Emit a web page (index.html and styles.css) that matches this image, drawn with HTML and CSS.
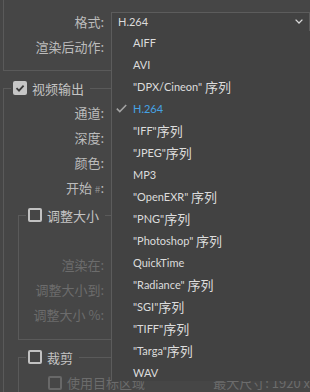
FILE: index.html
```html
<!DOCTYPE html>
<html lang="zh-CN">
<head>
    <meta charset="UTF-8">
    <meta name="viewport" content="width=device-width, initial-scale=1.0">
    <title>导出设置</title>
    <link rel="stylesheet" href="styles.css">
</head>
<body>
<div class="panel">
    <!-- 格式 / 渲染后动作 -->
    <div class="group group-top">
        <div class="row">
            <span class="label">格式:</span>
            <div class="select">
                <span>H.264</span>
                <svg class="chevron" width="8" height="5" viewBox="0 0 8 5">
                    <polyline points="0.6,0.6 4,4 7.4,0.6" fill="none" stroke="#d8d8d8" stroke-width="1.3"/>
                </svg>
            </div>
        </div>
        <div class="row">
            <span class="label">渲染后动作:</span>
        </div>
    </div>

    <fieldset class="group group-video">
        <legend><span class="check checked"><svg width="14" height="14" viewBox="0 0 14 14"><polyline points="3.5,7.2 6,9.6 10.6,4.6" fill="none" stroke="#3b3b3b" stroke-width="1.8"/></svg></span>视频输出</legend>
        <div class="row"><span class="label">通道:</span></div>
        <div class="row"><span class="label">深度:</span></div>
        <div class="row"><span class="label">颜色:</span></div>
        <div class="row"><span class="label">开始 <small>#</small>:</span></div>

        <fieldset class="group group-sub group-resize">
            <legend><span class="check"></span>调整大小</legend>
            <div class="row"><span class="label off">渲染在:</span></div>
            <div class="row"><span class="label off">调整大小到:</span></div>
            <div class="row"><span class="label off">调整大小 %:</span></div>
        </fieldset>

        <fieldset class="group group-sub group-crop">
            <legend><span class="check"></span>裁剪</legend>
            <div class="row">
                <div class="option">
                    <span class="check check-off"></span>
                    <span class="off">使用目标区域</span>
                </div>
                <span class="off max-size">最大尺寸: 1920 x</span>
            </div>
        </fieldset>
    </fieldset>

    <!-- 格式下拉列表 -->
    <ul class="dropdown">
        <li><span class="tick"></span>AIFF</li>
        <li><span class="tick"></span>AVI</li>
        <li><span class="tick"></span>"DPX/Cineon" <span class="zh">序列</span></li>
        <li class="selected"><span class="tick"><svg width="11" height="9" viewBox="0 0 11 9"><polyline points="0.8,4.6 3.8,7.6 10.2,1" fill="none" stroke="#a4a4a4" stroke-width="1.5"/></svg></span>H.264</li>
        <li><span class="tick"></span>"IFF"<span class="zh">序列</span></li>
        <li><span class="tick"></span>"JPEG"<span class="zh">序列</span></li>
        <li><span class="tick"></span>MP3</li>
        <li><span class="tick"></span>"OpenEXR" <span class="zh">序列</span></li>
        <li><span class="tick"></span>"PNG"<span class="zh">序列</span></li>
        <li><span class="tick"></span>"Photoshop" <span class="zh">序列</span></li>
        <li><span class="tick"></span>QuickTime</li>
        <li><span class="tick"></span>"Radiance" <span class="zh">序列</span></li>
        <li><span class="tick"></span>"SGI"<span class="zh">序列</span></li>
        <li><span class="tick"></span>"TIFF"<span class="zh">序列</span></li>
        <li><span class="tick"></span>"Targa"<span class="zh">序列</span></li>
        <li><span class="tick"></span>WAV</li>
    </ul>
</div>
</body>
</html>
```

FILE: styles.css
```css
body {
    margin: 0;
    background-color: #464646;
    font-family: "Noto Sans CJK SC", sans-serif;
    font-size: 13px;
    color: #bcbcbc;
    overflow: hidden;
}
.panel {
    position: relative;
    width: 310px;
    height: 392px;
    overflow: hidden;
}
.group {
    border: 1px solid #5a5a5a;
    border-top: 0;
    border-right: 0;
}
.group-top {
    margin-left: 3px;
    padding: 9px 0 11px 0;
}
fieldset.group {
    border-top: 1px solid #5a5a5a;
    border-bottom: 0;
    margin: 9px 0 0 3px;
    padding: 4px 0 0 0;
    min-width: 0;
}
legend {
    display: flex;
    align-items: center;
    height: 16px;
    margin-left: 7px;
    padding: 0 6px 0 2px;
    color: #c4c4c4;
}
.row {
    display: flex;
    align-items: center;
    height: 25px;
}
.label {
    flex: none;
    width: 100px;
    text-align: right;
    white-space: nowrap;
}
.label small {
    font-size: 10px;
    color: #8c8c8c;
}
.off {
    color: #6c6c6c;
}
.group-sub {
    margin-left: 14px !important;
}
.group-sub .label {
    width: 85px;
}
.group-resize {
    margin-top: 7px !important;
    padding: 29px 0 12px 0 !important;
    border-bottom: 1px solid #5a5a5a !important;
}
.group-crop {
    padding-top: 5px !important;
}
.check {
    flex: none;
    width: 14px;
    height: 14px;
    box-sizing: border-box;
    border: 2px solid #c2c2c2;
    border-radius: 2px;
    margin-right: 5px;
}
.check.checked {
    border: 0;
    background-color: #c6c6c6;
}
.check svg {
    display: block;
}
.check-off {
    border-color: #686868;
}
.option {
    display: flex;
    align-items: center;
    width: 167px;
    padding-left: 29px;
    white-space: nowrap;
}
.max-size {
    white-space: nowrap;
}
.select {
    display: flex;
    align-items: center;
    justify-content: space-between;
    width: 199px;
    height: 20px;
    box-sizing: border-box;
    margin-left: 7px;
    padding: 0 6px;
    background-color: #424242;
    border: 1px solid #5c5c5c;
    font-family: "Lato", sans-serif;
    font-size: 11px;
    color: #dcdcdc;
}
.dropdown {
    position: absolute;
    left: 111px;
    top: 31px;
    width: 210px;
    height: 350px;
    margin: 0;
    padding: 0;
    list-style: none;
    overflow: hidden;
    background-color: #424242;
    border-left: 1px solid #5c5c5c;
    font-family: "Lato", "Noto Sans CJK SC", sans-serif;
    font-size: 11px;
    color: #dcdcdc;
}
.dropdown li {
    display: flex;
    align-items: center;
    height: 22px;
    white-space: pre;
}
.dropdown .tick {
    flex: none;
    width: 21px;
    padding-left: 4px;
    box-sizing: border-box;
}
.dropdown .tick svg {
    display: block;
}
.dropdown .zh {
    font-family: "Noto Sans CJK SC", sans-serif;
    font-size: 13px;
}
.dropdown .selected {
    color: #45a2e4;
}
```
